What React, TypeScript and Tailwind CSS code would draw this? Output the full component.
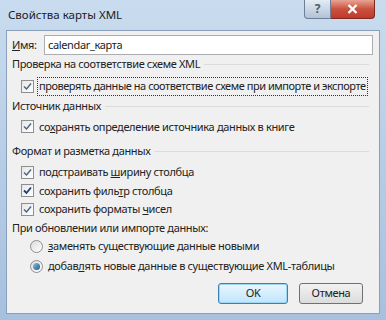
import React, { FC } from "react";

const font = { fontFamily: '"Noto Sans", "Open Sans", sans-serif' };

const Check: FC<{ strong?: boolean }> = ({ strong }) => (
  <span className="w-[13px] h-[13px] border border-[#8e8f8f] bg-gradient-to-br from-[#e6e6e6] to-white flex items-center justify-center shrink-0">
    <svg width="9" height="9" viewBox="0 0 9 9">
      <path
        d="M1 4.5 L3.5 7 L8 1.5"
        fill="none"
        stroke={strong ? "#1c3f7a" : "#4d6185"}
        strokeWidth={strong ? 1.8 : 1.4}
      />
    </svg>
  </span>
);

const Radio: FC<{ checked?: boolean }> = ({ checked }) => (
  <span className="w-[13px] h-[13px] rounded-full border border-[#8e8f8f] bg-gradient-to-br from-[#dcdcdc] to-white flex items-center justify-center shrink-0">
    {checked && (
      <span className="w-[7px] h-[7px] rounded-full bg-gradient-to-br from-[#8cc4e8] to-[#1c5b8a]" />
    )}
  </span>
);

const GroupTitle: FC<{ label: string }> = ({ label }) => (
  <div className="flex items-center gap-1 pr-[5px] h-[18px]">
    <span className="whitespace-nowrap">{label}</span>
    <span className="flex-1 h-px bg-[#dcdcdc]" />
  </div>
);

const CheckRow: FC<{ label: React.ReactNode; strong?: boolean; focus?: boolean }> = (props) => (
  <div className="flex items-center gap-[4px] pl-[9px] h-[18.5px]">
    <Check strong={props.strong} />
    <span
      className={`whitespace-nowrap px-px ${props.focus ? "outline outline-1 outline-dotted outline-[#333] tracking-[-0.46px]" : ""}`}
    >
      {props.label}
    </span>
  </div>
);

export default function App() {
  return (
    <div
      className="w-[386px] h-[320px] bg-gradient-to-b from-[#c9dcef] via-[#b7cde6] to-[#a6c0de] flex flex-col text-[11px] text-[#222] overflow-hidden"
      style={font}
    >
      <div className="h-[30px] flex items-start shrink-0">
        <span className="pl-[8px] pt-[6px] text-[11.5px] text-[#1b1b1b]">Свойства карты XML</span>
        <div className="ml-auto mr-[11px] flex">
          <div className="w-[27px] h-[19px] rounded-bl-[4px] border border-[#6d7f96] border-t-0 bg-gradient-to-b from-[#e4ecf4] to-[#b2c2d6] flex items-center justify-center text-[#4a5a70] font-bold text-[12px]">
            ?
          </div>
          <div className="w-[44px] h-[19px] rounded-br-[4px] border border-[#7a2b22] border-t-0 border-l-0 bg-gradient-to-b from-[#e8a393] via-[#c9513d] to-[#c2382a] flex items-center justify-center">
            <svg width="11" height="10" viewBox="0 0 11 10">
              <path d="M1.5 1 L9.5 9 M9.5 1 L1.5 9" stroke="#fff" strokeWidth="2.4" />
            </svg>
          </div>
        </div>
      </div>
      <div className="flex-1 mx-[6px] mb-[6px] border border-[#8aa0ba] bg-[#f0f0f0] px-[5px] pt-[4px] flex flex-col tracking-[-0.35px]">
        <div className="flex items-center gap-[8px] h-[20px]">
          <span className="w-[24px]">
            <span className="underline">И</span>мя:
          </span>
          <div className="flex-1 h-[20px] border border-[#abadb3] bg-white mr-[1px] flex items-center pl-[3px]">
            calendar_карта
          </div>
        </div>
        <GroupTitle label="Проверка на соответствие схеме XML" />
        <div className="mt-[4px]">
          <CheckRow focus label="проверять данные на соответствие схеме при импорте и экспорте" />
        </div>
        <div className="mt-[2px]">
          <GroupTitle label="Источник данных" />
        </div>
        <div className="mt-[2px]">
          <CheckRow
            label={
              <>
                со<span className="underline">х</span>ранять определение источника данных в книге
              </>
            }
          />
        </div>
        <div className="mt-[6px]">
          <GroupTitle label="Формат и разметка данных" />
        </div>
        <div className="mt-[3px] flex flex-col">
          <CheckRow
            label={
              <>
                подстраивать <span className="underline">ш</span>ирину столбца
              </>
            }
          />
          <CheckRow
            strong
            label={
              <>
                сохранить филь<span className="underline">т</span>р столбца
              </>
            }
          />
          <CheckRow
            label={
              <>
                сохранить форматы <span className="underline">ч</span>исел
              </>
            }
          />
        </div>
        <div className="mt-[2px] h-[16px] flex items-center">При обновлении или импорте данных:</div>
        <div className="flex flex-col">
          <div className="flex items-center gap-[5px] pl-[18px] h-[20px]">
            <Radio />
            <span className="whitespace-nowrap">
              <span className="underline">з</span>аменять существующие данные новыми
            </span>
          </div>
          <div className="flex items-center gap-[5px] pl-[18px] h-[20px]">
            <Radio checked />
            <span className="whitespace-nowrap">
              добав<span className="underline">л</span>ять новые данные в существующие XML-таблицы
            </span>
          </div>
        </div>
        <div className="flex justify-end gap-[11px] mt-[6px] pr-[11px]">
          <div className="w-[70px] h-[21px] rounded-[3px] border border-[#3c7fb1] bg-gradient-to-b from-[#eaf6fd] to-[#bee6fd] flex items-center justify-center shadow-[inset_0_0_0_1px_#9fd4f3]">
            OK
          </div>
          <div className="w-[64px] h-[21px] rounded-[3px] border border-[#707070] bg-gradient-to-b from-[#f2f2f2] to-[#dcdcdc] flex items-center justify-center">
            Отмена
          </div>
        </div>
      </div>
    </div>
  );
}
